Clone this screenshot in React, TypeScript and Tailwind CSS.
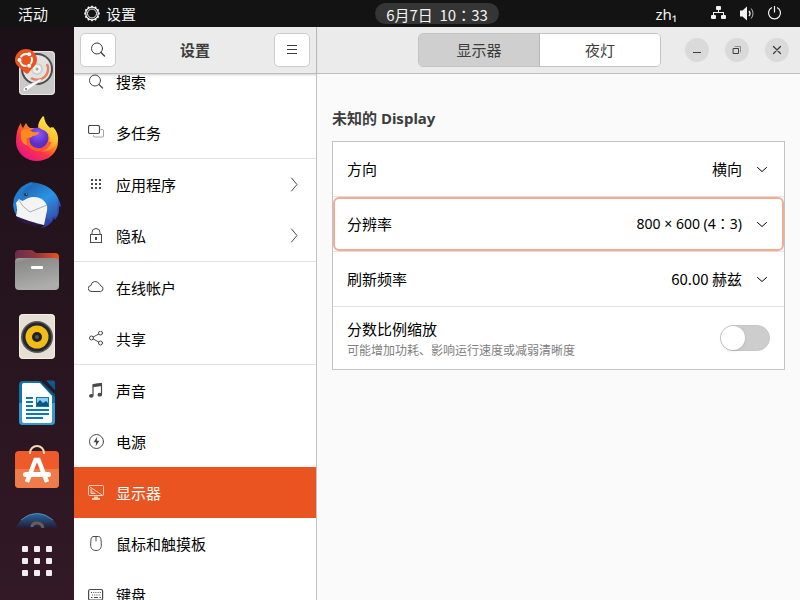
import { useState, type ReactNode } from "react";

const stroke = {
  fill: "none",
  stroke: "currentColor",
  strokeWidth: 1,
  strokeLinecap: "round" as const,
  strokeLinejoin: "round" as const,
};

function Icon({ children }: { children: ReactNode }) {
  return (
    <svg viewBox="0 0 16 16" className="size-4 shrink-0" aria-hidden="true" {...stroke}>
      {children}
    </svg>
  );
}

const SearchIcon = () => (
  <Icon>
    <circle cx="7" cy="6.500" r="5.500" />
    <path d="M11 10.500 14.500 14" strokeWidth="1.300" />
  </Icon>
);

const MultitaskIcon = () => (
  <Icon>
    <rect x="0.500" y="0.500" width="11" height="8" rx="1.500" strokeWidth="1.200" />
    <path d="M13 4.500h1.500a1 1 0 0 1 1 1v5.500a1 1 0 0 1-1 1H6.500a1 1 0 0 1-1-1v-.5" opacity="0.500" />
  </Icon>
);

const GridIcon = () => (
  <Icon>
    <g fill="currentColor" stroke="none">
      {[2, 6, 10].map((y) =>
        [3, 7, 11].map((x) => <rect key={`${x}-${y}`} x={x} y={y} width="2" height="2" />),
      )}
    </g>
  </Icon>
);

const LockIcon = () => (
  <Icon>
    <rect x="2.500" y="6.500" width="11" height="8" strokeLinejoin="miter" />
    <path d="M4 6.500V4.500a4 4 0 0 1 8 0v2" />
    <rect x="7" y="9" width="2" height="3" fill="currentColor" stroke="none" />
  </Icon>
);

const CloudIcon = () => (
  <Icon>
    <path d="M3.500 11.500h9a2.800 2.800 0 0 0 .4-5.500A3 3 0 0 0 11.200 4 4.300 4.300 0 0 0 3 5.500a3 3 0 0 0 .5 6Z" />
  </Icon>
);

const ShareIcon = () => (
  <Icon>
    <circle cx="3.500" cy="7" r="2" />
    <circle cx="12.500" cy="2" r="2" />
    <circle cx="12.500" cy="12" r="2" />
    <path d="M5.300 6 10.700 3M5.300 8l5.400 3" />
  </Icon>
);

const MusicIcon = () => (
  <Icon>
    <path d="M5 12V1.500L13.500.6V11" strokeWidth="1.200" />
    <path d="M5 1.200 14 0v3L5 4.200Z" fill="currentColor" stroke="none" />
    <ellipse cx="3.300" cy="12.800" rx="2.300" ry="1.900" fill="currentColor" stroke="none" />
    <ellipse cx="11.800" cy="11.700" rx="2.300" ry="1.900" fill="currentColor" stroke="none" />
  </Icon>
);

const PowerIcon = () => (
  <Icon>
    <circle cx="8.500" cy="7.500" r="7" />
    <path d="M9.200 2.800 5.500 8.200h2.600l-.5 4.200 3.800-5.600H8.800Z" fill="currentColor" stroke="none" />
  </Icon>
);

const DisplayIcon = () => (
  <Icon>
    <rect x="0.500" y="0.500" width="15" height="10" rx="1" />
    <path d="M2 2 14 10M3 4v4.500h4" />
    <path d="M3 4.500 8 8.500H3Z" fill="currentColor" opacity="0.500" stroke="none" />
    <path d="M6 11.500h4v1.500h2v2H4v-2h2Z" fill="currentColor" stroke="none" />
  </Icon>
);

const MouseIcon = () => (
  <Icon>
    <path d="M5.500.500h5c1.300 0 2.200 1 2.500 3l.3 4c.4 4.500-1.300 7-5.300 7S2.300 12 2.700 7.500l.3-4C3.300 1.500 4.200.5 5.500.5Z" />
    <path d="M8 1v4" />
  </Icon>
);

const KeyboardIcon = () => (
  <Icon>
    <rect x="0.600" y="2.500" width="14" height="10.500" rx="1.500" strokeWidth="1.200" />
    <path d="M3 5.500h10M4 8h9" strokeDasharray="1 1.200" strokeLinecap="butt" />
    <path d="M3 10.500h1.500M6 10.500h4M11.500 10.500H13" strokeLinecap="butt" />
  </Icon>
);

type Item = { label: string; icon: () => ReactNode; submenu?: boolean; divider?: boolean; selected?: boolean };

const items: Item[] = [
  { label: "搜索", icon: SearchIcon },
  { label: "多任务", icon: MultitaskIcon, divider: true },
  { label: "应用程序", icon: GridIcon, submenu: true },
  { label: "隐私", icon: LockIcon, submenu: true, divider: true },
  { label: "在线帐户", icon: CloudIcon },
  { label: "共享", icon: ShareIcon, divider: true },
  { label: "声音", icon: MusicIcon },
  { label: "电源", icon: PowerIcon },
  { label: "显示器", icon: DisplayIcon, selected: true },
  { label: "鼠标和触摸板", icon: MouseIcon },
  { label: "键盘", icon: KeyboardIcon },
];

function SettingsGear() {
  const teeth = Array.from({ length: 12 }, (_, i) => i * 30);
  return (
    <svg viewBox="0 0 16 16" className="size-4 overflow-visible" fill="none" stroke="currentColor" aria-hidden="true">
      <circle cx="8" cy="7.500" r="6.300" strokeWidth="1.300" />
      <circle cx="8" cy="7.500" r="4.500" strokeWidth="1" />
      {teeth.map((a) => (
        <path key={a} d="M8-.3v1.600" strokeWidth="1.800" transform={`rotate(${a} 8 7.500)`} />
      ))}
    </svg>
  );
}

function TopBar() {
  return (
    <header className="grid h-[27px] shrink-0 grid-cols-[1fr_auto_1fr] items-center bg-[#131313] text-[#f2f2f2]">
      <div className="flex items-center">
        <button type="button" className="w-[66px] leading-5">活动</button>
        <button type="button" className="flex items-center gap-1.5 pl-[18px]">
          <SettingsGear />
          <span className="leading-5">设置</span>
        </button>
      </div>
      <button
        type="button"
        className="ml-[74px] h-[21px] w-[124px] rounded-full bg-[#353535] font-['Noto_Sans_CJK_TC',sans-serif] leading-6 whitespace-pre"
      >
        6月7日  10：33
      </button>
      <div className="flex items-center justify-end pr-[17px]">
        <button type="button" className="mr-[34px] leading-5">zh₁</button>
        <button type="button" className="flex items-center gap-3" aria-label="系统菜单">
          <svg viewBox="0 0 16 16" className="size-4" fill="currentColor" aria-hidden="true">
            <rect x="5" y="0" width="5" height="4" rx="1" />
            <rect x="0" y="9" width="5" height="4" rx="1" />
            <rect x="10" y="9" width="5" height="4" rx="1" />
            <path d="M7 4h1v2H13v3h-1V7H3v2H2V6h5Z" />
          </svg>
          <svg viewBox="0 0 16 16" className="size-4" fill="none" stroke="currentColor" aria-hidden="true">
            <path d="M1 4.500h2.500L8 .5v14L3.500 10.500H1Z" fill="currentColor" stroke="none" />
            <path d="M10 5q2 2.500 0 5" strokeWidth="1.400" />
            <path d="M12.200 2.500q3.600 5 0 10" opacity="0.750" />
          </svg>
          <svg viewBox="0 0 16 16" className="size-4" fill="none" stroke="currentColor" strokeWidth="1.200" aria-hidden="true">
            <path d="M5 1.500a6 6 0 1 0 5 0M7.500 0v6.500" />
          </svg>
        </button>
      </div>
    </header>
  );
}

const InstallerArt = () => (
  <>
    <rect x="6" y="3" width="36" height="44" rx="4" fill="#c9c9c7" />
    <rect x="6.500" y="3.500" width="35" height="43" rx="4" fill="none" stroke="#e6e6e4" />
    <circle cx="24" cy="21" r="16" fill="#4b4b4b" />
    <circle cx="24" cy="21" r="14" fill="#e2e2e0" />
    <path d="M34 16a11 11 0 0 1-16 14" fill="none" stroke="#e9815f" strokeWidth="2.500" />
    <circle cx="24" cy="21" r="6" fill="#cfcfcd" />
    <circle cx="24" cy="21" r="4" fill="#f2f2f0" />
    <circle cx="24" cy="21" r="1.500" fill="#a2a2a0" />
    <path d="M29 32 15 42q-3 2-4.500 1t1-4L27 31Z" fill="#fff" stroke="#b4b4b4" strokeWidth="0.500" />
    <circle cx="13" cy="41" r="1" fill="#777" />
    <path d="M12.500 25C7 20 2 17 2 12a11 11 0 0 1 22 0c0 5-5 8-8.500 13q-1.500 1.500-3 0Z" fill="#e95420" />
    <circle cx="13" cy="12" r="6" fill="none" stroke="#fff" strokeWidth="2" strokeDasharray="8 4.570" strokeDashoffset="4" />
    <circle cx="6.500" cy="12" r="2" fill="#fff" />
    <circle cx="16.200" cy="6.200" r="2" fill="#fff" />
    <circle cx="16.200" cy="17.800" r="2" fill="#fff" />
  </>
);

const FirefoxArt = () => (
  <>
    <defs>
      <linearGradient id="fox" x1="0.850" y1="0.100" x2="0.200" y2="0.950">
        <stop offset="0" stopColor="#fff44f" />
        <stop offset="0.350" stopColor="#ff980e" />
        <stop offset="0.650" stopColor="#ff3647" />
        <stop offset="1" stopColor="#e31587" />
      </linearGradient>
      <radialGradient id="globe" cx="0.500" cy="0.300">
        <stop offset="0" stopColor="#9059ff" />
        <stop offset="1" stopColor="#5b2fc4" />
      </radialGradient>
      <linearGradient id="tail" x1="0.700" y1="0" x2="0.400" y2="1">
        <stop offset="0" stopColor="#fff44f" />
        <stop offset="0.600" stopColor="#ffbd2e" />
        <stop offset="1" stopColor="#ff7a30" />
      </linearGradient>
    </defs>
    <path d="M8 9q0 3 2 5l3-5q1 3 4 5h8Q25 8 30 2q0 6 7 12l2-1q6 7 6 14A21 19.500 0 0 1 3 28Q3 15 8 9Z" fill="url(#fox)" />
    <circle cx="25" cy="24" r="10.500" fill="url(#globe)" />
    <path d="M31 2q-9 9-3 13 10 3 9 12-1 8-9 11 15-1 17-13 0-7-5-12l-2 2Q31 9 31 2Z" fill="url(#tail)" />
    <path d="M8 17q5-4 10 0 2 2 8 1 0 3-6 4-2 2-5 2-1 4 2 8Q6 31 8 17Z" fill="#ff8a20" />
    <path d="M15 24q-1 10 10 12 9 0 12-8" fill="none" stroke="#ff5a2f" strokeWidth="3" />
  </>
);

const ThunderbirdArt = () => (
  <>
    <defs>
      <linearGradient id="bird" x1="0" y1="0" x2="0.700" y2="1">
        <stop offset="0" stopColor="#1f75c5" />
        <stop offset="0.500" stopColor="#2384dc" />
        <stop offset="1" stopColor="#36369b" />
      </linearGradient>
      <linearGradient id="wing" x1="0.200" y1="0" x2="0.800" y2="1">
        <stop stopColor="#1e61ad" />
        <stop offset="0.500" stopColor="#2b93e4" />
        <stop offset="1" stopColor="#3450ab" />
      </linearGradient>
    </defs>
    <g transform="translate(0 1)">
      <path d="M3 13Q8 4 18 1l3 2q12-1 19 8 7 7 8 15l-2-1q1 8-4 14l-1-2q-3 8-13 10l4-3-20-2Q1 36 0 24l1-7Z" fill="url(#bird)" />
      <path d="M3 28q4 6 1 11l20 7-1-6Z" fill="#2b1746" />
      <path d="M6 18q3 3 7 0 8-5 16-2 6 3 6 9l-4 19Q14 40 3 35q2-6 0-13Z" fill="#f4f4f4" />
      <path d="M5 18q5 9 12 13l17-7" fill="none" stroke="#9a9a9a" strokeWidth="0.800" />
      <path d="M18 1q20 2 27 16l-1 18-5 1-1 4-4-4-2 5q5-15 0-20Q26 14 14 17l-5 3q-2-6 2-11 3-4 10-6Z" fill="url(#wing)" />
      <ellipse cx="13" cy="13.500" rx="2" ry="1.500" fill="#183653" />
      <circle cx="13.500" cy="13.200" r="0.600" fill="#d9b36a" />
    </g>
  </>
);

const FilesArt = () => (
  <>
    <defs>
      <linearGradient id="folder" x1="0" x2="1">
        <stop stopColor="#67304d" />
        <stop offset="0.500" stopColor="#92353d" />
        <stop offset="1" stopColor="#e95420" />
      </linearGradient>
      <linearGradient id="front" x1="0" y1="0" x2="0.300" y2="1">
        <stop stopColor="#a3a3a1" />
        <stop offset="0.150" stopColor="#8a8a88" />
        <stop offset="1" stopColor="#adadab" />
      </linearGradient>
    </defs>
    <path d="M2 8q0-4 4-4h13l4 3h19q4 0 4 4v10H2Z" fill="url(#folder)" />
    <rect x="2" y="12" width="44" height="32" rx="4" fill="url(#front)" />
    <rect x="18" y="20" width="12" height="3" rx="1" fill="#fff" />
  </>
);

const RhythmboxArt = () => (
  <>
    <rect x="6" y="2" width="36" height="45" rx="4" fill="#e6e0d4" />
    <rect x="6.500" y="2.500" width="35" height="44" rx="4" fill="none" stroke="#f4eee3" />
    <circle cx="24" cy="25" r="16" fill="#5b5b5d" />
    <circle cx="24" cy="25" r="14.500" fill="#25262e" />
    <circle cx="24" cy="25" r="11.500" fill="#f1bc15" />
    <circle cx="24" cy="25" r="5" fill="#202124" />
    <circle cx="24" cy="25" r="2" fill="#55565a" />
  </>
);

const WriterArt = () => (
  <>
    <rect x="6" y="3" width="36" height="44" rx="4" fill="#1273a9" />
    <path d="M6 25h36v18q0 4-4 4H10q-4 0-4-4Z" fill="#329bcb" />
    <path d="M9 7q0-2 2-2h16l12 13v25q0 2-2 2H11q-2 0-2-2Z" fill="#fff" />
    <path d="M26 3h7l9 10v6Z" fill="#0d4a6e" />
    <path d="M27 2h6l9 10v4Z" fill="#2b1520" />
    <path d="M33 2.500h7q2 0 2 2V12Z" fill="#095c8b" />
    <path d="M13 20h7M13 24h7M13 28h7M13 32h23M13 36h23M13 40h17" stroke="#087ab7" strokeWidth="2" />
    <rect x="23.500" y="19.500" width="12" height="9" fill="#8fcdec" stroke="#087ab7" />
    <path d="M24 28v-3l3-3 3 3 3-2 2 2v3Z" fill="#075784" />
  </>
);

const SoftwareArt = () => (
  <>
    <rect x="2" y="7" width="44" height="37" rx="4" fill="#ec5b29" />
    <path d="M2 25h44v15q0 4-4 4H6q-4 0-4-4Z" fill="#f07b4a" />
    <path d="M17 10V9a7 7 0 0 1 14 0v1" fill="none" stroke="#f7d7b5" strokeWidth="2" />
    <path d="M14 38 22.500 16h3L34 38" fill="none" stroke="#fff" strokeWidth="4.500" />
    <rect x="10" y="28" width="28" height="5" rx="2.500" fill="#fff" />
  </>
);

const HelpArt = () => (
  <>
    <defs>
      <linearGradient id="help" gradientUnits="userSpaceOnUse" x1="0" y1="2" x2="0" y2="18">
        <stop stopColor="#2473ae" />
        <stop offset="1" stopColor="#241a32" />
      </linearGradient>
    </defs>
    <circle cx="24" cy="25" r="22" fill="url(#help)" />
    <path d="M8 10q16-13 32 0" fill="none" stroke="#6894b5" strokeWidth="0.700" />
    <path d="M19 17q0-4 5-4t6 5" fill="none" stroke="#6b5b5c" strokeWidth="3" />
  </>
);

const apps = [
  { name: "安装 Ubuntu", art: InstallerArt },
  { name: "Firefox", art: FirefoxArt },
  { name: "Thunderbird", art: ThunderbirdArt },
  { name: "文件", art: FilesArt },
  { name: "Rhythmbox", art: RhythmboxArt },
  { name: "Writer", art: WriterArt },
  { name: "Ubuntu Software", art: SoftwareArt },
  { name: "帮助", art: HelpArt },
];

function Dock() {
  return (
    <nav aria-label="Dock" className="flex w-[74px] shrink-0 flex-col items-center bg-linear-to-b from-[#1c1017] to-[#321925]">
      <div className="flex min-h-0 flex-1 flex-col gap-[18px] overflow-hidden pt-[21px]">
        {apps.map(({ name, art: Art }) => (
          <button key={name} type="button" aria-label={name} className="size-12 shrink-0">
            <svg viewBox="0 0 48 48" className="size-12" aria-hidden="true">
              <Art />
            </svg>
          </button>
        ))}
      </div>
      <button type="button" aria-label="显示应用程序" className="mt-[18px] mb-6 grid shrink-0 grid-cols-3 gap-1.5">
        {Array.from({ length: 9 }, (_, i) => (
          <span key={i} className="size-1.5 rounded-[1px] bg-[#f0eef0]" />
        ))}
      </button>
    </nav>
  );
}

const headerButton =
  "flex h-[34px] w-9 items-center justify-center rounded-[5px] border border-[#cdcdcd] bg-white text-[#3d3d3d]";

function Sidebar() {
  return (
    <aside className="flex w-[243px] shrink-0 flex-col border-r border-[#c3c3c3] bg-white">
      <div className="z-10 flex h-[47px] shrink-0 items-center justify-between border-b border-[#bdbdbd] bg-[#ebebeb] px-1.5 shadow-[0_1px_2px_#00000030]">
        <button type="button" aria-label="搜索" className={headerButton}>
          <SearchIcon />
        </button>
        <h1 className="font-bold">设置</h1>
        <button type="button" aria-label="菜单" className={headerButton}>
          <Icon>
            <path d="M3 3.500h10M3 7.500h10M3 11.500h10" strokeLinecap="butt" />
          </Icon>
        </button>
      </div>
      <nav aria-label="设置" className="min-h-0 flex-1 overflow-hidden">
        <ul className="-mt-[18px]">
          {items.map(({ label, icon: ItemIcon, submenu, divider, selected }) => (
            <li key={label} className={divider ? "border-b border-[#e2e2e2]" : ""}>
              <a
                href="#"
                aria-current={selected ? "page" : undefined}
                className={`flex h-[51px] items-center gap-3 px-[14px] ${
                  selected ? "bg-[#e95420] text-white" : "text-black"
                }`}
              >
                <span className={selected ? "text-[#f9cfc0]" : "text-[#4a4a4a]"}>
                  <ItemIcon />
                </span>
                <span className="flex-1 leading-4">{label}</span>
                {submenu && (
                  <span className="text-[#4a4a4a]">
                    <Icon>
                      <path d="M5.500 1 11 7.500 5.500 14" />
                    </Icon>
                  </span>
                )}
              </a>
            </li>
          ))}
        </ul>
      </nav>
    </aside>
  );
}

type SelectRowProps = { id: string; label: string; options: string[]; focused?: boolean; numeric?: boolean };

function SelectRow({ id, label, options, focused, numeric }: SelectRowProps) {
  return (
    <div className="border-b border-[#e2e2e2]">
      <div
        className={`flex h-[54px] items-center justify-between rounded-md border-2 px-3 ${
          focused ? "border-[#f4aa90]" : "border-transparent"
        }`}
      >
        <label htmlFor={id} className="leading-5">
          {label}
        </label>
        <div className="flex items-center gap-3 text-black">
          <select
            id={id}
            className={`field-sizing-content cursor-pointer appearance-none bg-transparent outline-none ${
              numeric
                ? "font-['Noto_Sans','Noto_Sans_CJK_TC',sans-serif] text-sm"
                : "font-['Noto_Sans_CJK_SC',sans-serif]"
            }`}
          >
            {options.map((o) => (
              <option key={o}>{o}</option>
            ))}
          </select>
          <Icon>
            <path d="M3.500 6.500 8 10.500l4.500-4" />
          </Icon>
        </div>
      </div>
    </div>
  );
}

const windowButton = "flex size-6 items-center justify-center rounded-full bg-[#dadada] text-[#3d3d3d]";

function DisplayPanel() {
  const [scaling, setScaling] = useState(false);
  return (
    <main className="flex min-w-0 flex-1 flex-col bg-[#fafafa]">
      <div className="flex h-[47px] shrink-0 items-center justify-end gap-6 border-b border-[#bdbdbd] bg-[#ebebeb] pr-[11px]">
        <div className="flex h-[34px] overflow-hidden rounded-[5px] border border-[#c3c3c3]">
          <button type="button" className="w-[121px] border-r border-[#b8b8b8] bg-[#cfcfcf]">
            显示器
          </button>
          <button type="button" className="w-[120px] bg-white">
            夜灯
          </button>
        </div>
        <div className="flex gap-4">
          <button type="button" aria-label="最小化" className={windowButton}>
            <Icon>
              <path d="M4 10.500h8" strokeLinecap="butt" />
            </Icon>
          </button>
          <button type="button" aria-label="还原" className={windowButton}>
            <Icon>
              <path d="M4.500 6.500h5v5h-5Z" strokeLinejoin="miter" />
              <path d="M6 4.500h5.500V10" opacity="0.500" strokeLinejoin="miter" />
            </Icon>
          </button>
          <button type="button" aria-label="关闭" className={windowButton}>
            <Icon>
              <path d="m4.500 4.500 7 7m0-7-7 7" strokeWidth="1.300" />
            </Icon>
          </button>
        </div>
      </div>
      <section className="px-[15px] pt-8">
        <h2 className="font-bold leading-6">未知的 Display</h2>
        <div className="mt-[11px] border border-[#c3c3c3] bg-white text-black">
          <SelectRow id="orientation" label="方向" options={["横向"]} />
          <SelectRow id="resolution" label="分辨率" options={["800 × 600 (4：3)"]} focused numeric />
          <SelectRow id="refresh" label="刷新频率" options={["60.00 赫兹"]} />
          <div className="flex h-[62px] items-center justify-between px-3.5">
            <label htmlFor="scaling">
              <span className="block pb-0.5 leading-6">分数比例缩放</span>
              <span className="block text-xs text-[#808080]">可能增加功耗、影响运行速度或减弱清晰度</span>
            </label>
            <input
              id="scaling"
              type="checkbox"
              role="switch"
              checked={scaling}
              onChange={(e) => setScaling(e.target.checked)}
              className="flex h-[26px] w-[50px] shrink-0 cursor-pointer appearance-none rounded-full border border-[#c6c6c6] bg-[#cdcdcd] before:size-6 before:rounded-full before:bg-white before:shadow-sm checked:justify-end checked:bg-[#e95420]"
            />
          </div>
        </div>
      </section>
    </main>
  );
}

export default function App() {
  return (
    <div className="flex h-screen flex-col overflow-hidden font-['Noto_Sans','Noto_Sans_CJK_SC',sans-serif] text-[15px] text-[#3d3d3d]">
      <TopBar />
      <div className="flex min-h-0 flex-1">
        <Dock />
        <Sidebar />
        <DisplayPanel />
      </div>
    </div>
  );
}
